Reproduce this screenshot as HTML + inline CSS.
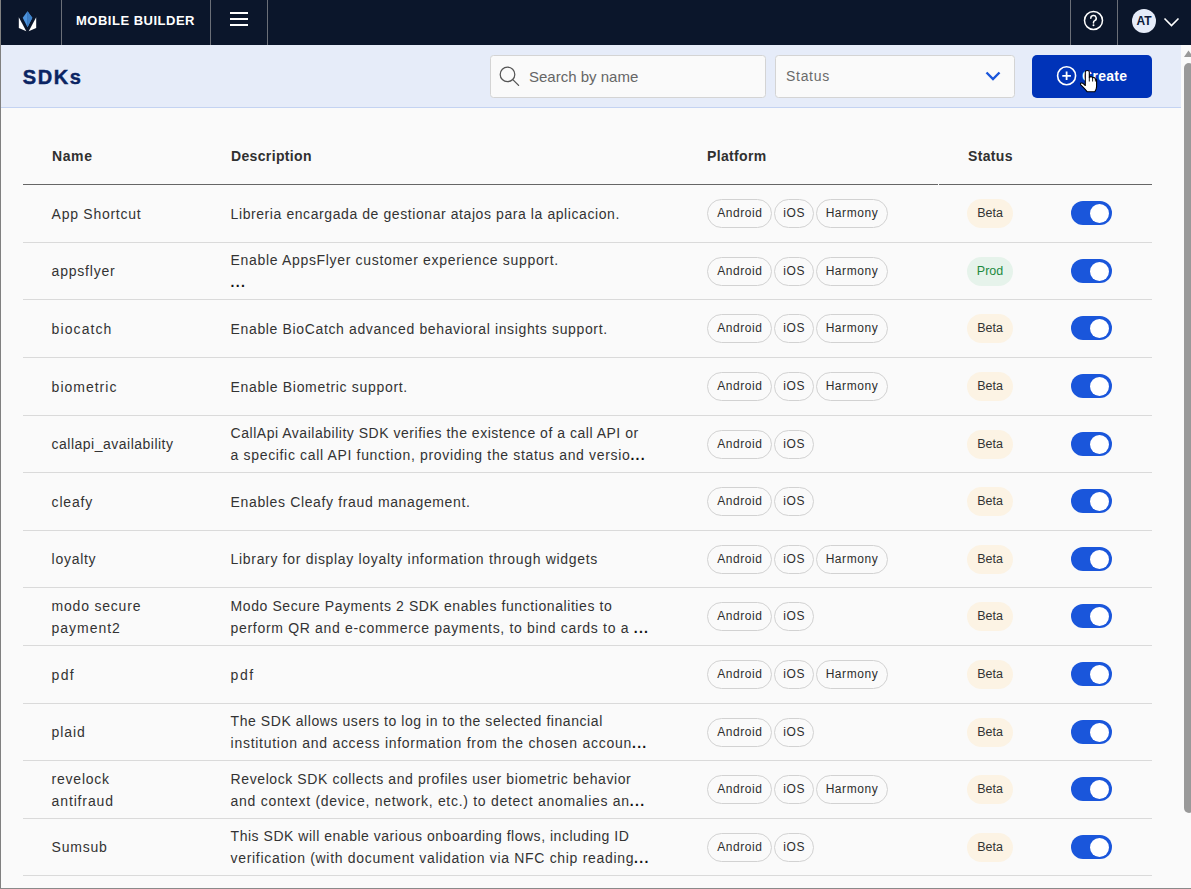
<!DOCTYPE html>
<html><head><meta charset="utf-8">
<style>
*{box-sizing:border-box;margin:0;padding:0}
html,body{width:1191px;height:889px;overflow:hidden}
body{font-family:"Liberation Sans",sans-serif;background:#fafafa;position:relative;color:#333}
.abs{position:absolute}
#hdr{left:0;top:0;width:1191px;height:45px;background:#0b162b}
.vsep{position:absolute;top:0;width:1px;height:45px;background:#6b6f78}
#brand{left:76px;top:13px;font-weight:bold;font-size:13px;color:#fff;letter-spacing:0.5px}
#sub{left:0;top:45px;width:1181px;height:63px;background:#e6ecf9;border-bottom:1px solid #c4d3f2}
#title{left:22.7px;top:65.5px;font-weight:bold;font-size:20px;color:#0b2463;letter-spacing:1.6px;-webkit-text-stroke:0.45px #0b2463}
.input{position:absolute;background:#fafafa;border:1px solid #d4d4d4;border-radius:3.5px}
#search{left:490px;top:55px;width:276px;height:43px}
#status{left:775px;top:55px;width:240px;height:43px}
#create{left:1032px;top:55px;width:120px;height:43px;background:#0033b8;border-radius:5px}
.ph{position:absolute;color:#666;font-size:15px}
.hd{position:absolute;top:148px;font-weight:bold;font-size:14px;color:#303030;letter-spacing:0.35px}
.hline{position:absolute;left:23px;top:184px;width:1129px;height:1px;background:#666}
.rline{position:absolute;left:23px;width:1129px;height:1px;background:#dadada}
.nm,.ds{position:absolute;font-size:14px;color:#333;letter-spacing:0.5px;white-space:nowrap;line-height:22px}
.chips{position:absolute;left:707px;display:flex;gap:1.3px}
.chip{height:29px;border:1px solid #d2d2d2;border-radius:15px;font-size:12px;line-height:26.5px;color:#2e2e2e;text-align:center;letter-spacing:0.55px;text-indent:0.5px}
.badge{position:absolute;left:967px;width:46px;height:29px;border-radius:15px;font-size:12.5px;line-height:29px;text-align:center}
.beta{background:#fcf3e4;color:#333}
.prod{background:#e6f3eb;color:#1d8a3f}
.dots{letter-spacing:1.3px;color:#111}
.tog{position:absolute;left:1071px;width:41px;height:24px;border-radius:12px;background:#1a56db}
.tog::after{content:"";position:absolute;left:19px;top:2.5px;width:19px;height:19px;border-radius:50%;background:#fff}
#sb{left:1181px;top:45px;width:10px;height:843px;background:#fafafa}
#thumb{left:1184px;top:63px;width:10px;height:750px;background:#999;border-radius:5px}
</style></head><body>
<div id="hdr" class="abs">
  <svg class="abs" style="left:0;top:0" width="60" height="45" viewBox="0 0 60 45">
    <polygon points="27.5,11.3 32.3,17.8 27.5,27.2 22.7,17.8" fill="#4d93dc"/>
    <polygon points="27.5,11.3 32.3,17.8 27.5,27.2" fill="#3d80c8"/>
    <line x1="27.5" y1="12" x2="27.5" y2="26.5" stroke="#3570b5" stroke-width="0.6"/>
    <polygon points="18.8,17.3 26.3,31.2 18.8,28" fill="#fff"/>
    <polygon points="36.2,17.3 28.7,31.2 36.2,28" fill="#fff"/>
  </svg>
  <div class="vsep" style="left:61px"></div>
  <div id="brand" class="abs">MOBILE BUILDER</div>
  <div class="vsep" style="left:210px"></div>
  <div class="abs" style="left:230px;top:12px;width:18px;height:2px;background:#fff"></div>
  <div class="abs" style="left:230px;top:18px;width:18px;height:2px;background:#fff"></div>
  <div class="abs" style="left:230px;top:24px;width:18px;height:2px;background:#fff"></div>
  <div class="vsep" style="left:267px"></div>
  <div class="vsep" style="left:1070px"></div>
  <div class="vsep" style="left:1117px"></div>

  <svg class="abs" style="left:1082px;top:9px" width="24" height="24" viewBox="0 0 24 24"><circle cx="11.5" cy="11.5" r="9" fill="none" stroke="#fff" stroke-width="1.5"/><path d="M8.8 9.2a2.7 2.7 0 1 1 3.9 2.4c-.8.4-1.2 1-1.2 1.8v.6" fill="none" stroke="#fff" stroke-width="1.5" stroke-linecap="round"/><circle cx="11.5" cy="16.3" r="1" fill="#fff"/></svg>
  <div class="abs" style="left:1132px;top:9px;width:24px;height:24px;border-radius:50%;background:#e6ecf9;color:#0d1b3a;font-weight:bold;font-size:12px;line-height:24px;text-align:center">AT</div>
  <svg class="abs" style="left:1163px;top:15.7px" width="17" height="12" viewBox="0 0 17 12"><path d="M1.5 2.5 L8.5 9.5 L15.5 2.5" fill="none" stroke="#fff" stroke-width="1.6"/></svg>
</div>
<div id="sub" class="abs"></div>
<div id="title" class="abs">SDKs</div>
<div id="search" class="input"></div>
<div class="ph" style="left:529px;top:68px">Search by name</div>
<div id="status" class="input"></div>
<div class="ph" style="left:786px;top:68px;font-size:14px;letter-spacing:0.7px;color:#6a6a6a">Status</div>
<div id="create" class="abs"></div>

<svg class="abs" style="left:498px;top:66px" width="24" height="22" viewBox="0 0 24 22"><circle cx="9.5" cy="8.4" r="7.3" fill="none" stroke="#555" stroke-width="1.25"/><path d="M14.8 13.6 L20.6 19.4" stroke="#555" stroke-width="1.3" stroke-linecap="round"/></svg>
<svg class="abs" style="left:983.5px;top:70.3px" width="18" height="13" viewBox="0 0 18 13"><path d="M2.5 2.5 L9 9 L15.5 2.5" fill="none" stroke="#1a56db" stroke-width="2.4"/></svg>
<svg class="abs" style="left:1055px;top:64px" width="24" height="24" viewBox="0 0 24 24"><circle cx="11.6" cy="11.8" r="9" fill="none" stroke="#fff" stroke-width="1.6"/><path d="M11.6 7.5v8.6M7.3 11.8h8.6" stroke="#fff" stroke-width="1.8"/></svg>
<div class="abs" style="left:1082px;top:67.5px;font-weight:bold;font-size:14px;color:#fff;letter-spacing:0.3px">Create</div>
<svg class="abs" style="left:1079px;top:69px" width="20" height="25" viewBox="0 0 20 25"><path d="M6.3 3 Q6.3 1.5 8.3 1.5 Q10.3 1.5 10.3 3 L10.3 8.6 Q10.8 7.6 12.1 7.6 Q13.4 7.6 13.6 8.9 Q14.1 8.4 15.1 8.6 Q16.3 8.9 16.4 10.1 Q17.6 9.9 17.6 11.6 L17.6 17.5 Q17.6 20.3 15.8 22.8 L8.3 22.8 Q6.3 20.3 4.3 18.3 L1.8 15.8 Q1 14.7 2.1 14.1 Q3.4 13.6 4.8 15.1 L6.3 16.5 Z" fill="#fff" stroke="#000" stroke-width="1.1" stroke-linejoin="round"/><path d="M10.3 8.6 V12.5 M13.6 8.9 V12.5 M16.4 10.1 V12.5" stroke="#000" stroke-width="0.9"/></svg>
<div class="hd" style="left:52px;letter-spacing:0.6px">Name</div>
<div class="hd" style="left:231px">Description</div>
<div class="hd" style="left:707px">Platform</div>
<div class="hd" style="left:968px">Status</div>
<div class="hline"></div><div class="abs" style="left:938px;top:184px;width:1px;height:1px;background:#fafafa"></div>
<!--ROWS-->
<div class='rline' style='top:242px'></div>
<div class='nm' style='left:51.6px;top:202.5px'><span style='letter-spacing:0.73px'>App Shortcut</span></div>
<div class='ds' style='left:230.6px;top:202.5px'><span style='letter-spacing:0.58px'>Libreria encargada de gestionar atajos para la aplicacion.</span></div>
<div class='chips' style='top:199.0px'><div class='chip' style='width:65.3px'>Android</div><div class='chip' style='width:40.7px'>iOS</div><div class='chip' style='width:72.2px'>Harmony</div></div>
<div class='badge beta' style='top:199.0px'>Beta</div>
<div class='tog' style='top:201px'></div>
<div class='rline' style='top:299px'></div>
<div class='nm' style='left:51.6px;top:260.0px'><span style='letter-spacing:0.78px'>appsflyer</span></div>
<div class='ds' style='left:230.6px;top:249.0px'><span style='letter-spacing:0.67px'>Enable AppsFlyer customer experience support.</span><br><span style='letter-spacing:0.60px'><b class='dots'>...</b></span></div>
<div class='chips' style='top:256.5px'><div class='chip' style='width:65.3px'>Android</div><div class='chip' style='width:40.7px'>iOS</div><div class='chip' style='width:72.2px'>Harmony</div></div>
<div class='badge prod' style='top:256.5px'>Prod</div>
<div class='tog' style='top:259px'></div>
<div class='rline' style='top:357px'></div>
<div class='nm' style='left:51.6px;top:317.5px'><span style='letter-spacing:1.09px'>biocatch</span></div>
<div class='ds' style='left:230.6px;top:317.5px'><span style='letter-spacing:0.64px'>Enable BioCatch advanced behavioral insights support.</span></div>
<div class='chips' style='top:314.0px'><div class='chip' style='width:65.3px'>Android</div><div class='chip' style='width:40.7px'>iOS</div><div class='chip' style='width:72.2px'>Harmony</div></div>
<div class='badge beta' style='top:314.0px'>Beta</div>
<div class='tog' style='top:316px'></div>
<div class='rline' style='top:415px'></div>
<div class='nm' style='left:51.6px;top:375.5px'><span style='letter-spacing:1.00px'>biometric</span></div>
<div class='ds' style='left:230.6px;top:375.5px'><span style='letter-spacing:0.68px'>Enable Biometric support.</span></div>
<div class='chips' style='top:372.0px'><div class='chip' style='width:65.3px'>Android</div><div class='chip' style='width:40.7px'>iOS</div><div class='chip' style='width:72.2px'>Harmony</div></div>
<div class='badge beta' style='top:372.0px'>Beta</div>
<div class='tog' style='top:374px'></div>
<div class='rline' style='top:472px'></div>
<div class='nm' style='left:51.6px;top:433.0px'><span style='letter-spacing:0.49px'>callapi_availability</span></div>
<div class='ds' style='left:230.6px;top:422.0px'><span style='letter-spacing:0.52px'>CallApi Availability SDK verifies the existence of a call API or</span><br><span style='letter-spacing:0.66px'>a specific call API function, providing the status and versio<b class='dots'>...</b></span></div>
<div class='chips' style='top:429.5px'><div class='chip' style='width:65.3px'>Android</div><div class='chip' style='width:40.7px'>iOS</div></div>
<div class='badge beta' style='top:429.5px'>Beta</div>
<div class='tog' style='top:432px'></div>
<div class='rline' style='top:530px'></div>
<div class='nm' style='left:51.6px;top:490.5px'><span style='letter-spacing:0.82px'>cleafy</span></div>
<div class='ds' style='left:230.6px;top:490.5px'><span style='letter-spacing:0.64px'>Enables Cleafy fraud management.</span></div>
<div class='chips' style='top:487.0px'><div class='chip' style='width:65.3px'>Android</div><div class='chip' style='width:40.7px'>iOS</div></div>
<div class='badge beta' style='top:487.0px'>Beta</div>
<div class='tog' style='top:489px'></div>
<div class='rline' style='top:587px'></div>
<div class='nm' style='left:51.6px;top:548.0px'><span style='letter-spacing:0.72px'>loyalty</span></div>
<div class='ds' style='left:230.6px;top:548.0px'><span style='letter-spacing:0.68px'>Library for display loyalty information through widgets</span></div>
<div class='chips' style='top:544.5px'><div class='chip' style='width:65.3px'>Android</div><div class='chip' style='width:40.7px'>iOS</div><div class='chip' style='width:72.2px'>Harmony</div></div>
<div class='badge beta' style='top:544.5px'>Beta</div>
<div class='tog' style='top:547px'></div>
<div class='rline' style='top:645px'></div>
<div class='nm' style='left:51.6px;top:594.5px'><span style='letter-spacing:0.79px'>modo secure</span><br><span style='letter-spacing:0.97px'>payment2</span></div>
<div class='ds' style='left:230.6px;top:594.5px'><span style='letter-spacing:0.58px'>Modo Secure Payments 2 SDK enables functionalities to</span><br><span style='letter-spacing:0.68px'>perform QR and e-commerce payments, to bind cards to a <b class='dots'>...</b></span></div>
<div class='chips' style='top:602.0px'><div class='chip' style='width:65.3px'>Android</div><div class='chip' style='width:40.7px'>iOS</div></div>
<div class='badge beta' style='top:602.0px'>Beta</div>
<div class='tog' style='top:604px'></div>
<div class='rline' style='top:703px'></div>
<div class='nm' style='left:51.6px;top:663.5px'><span style='letter-spacing:1.35px'>pdf</span></div>
<div class='ds' style='left:230.6px;top:663.5px'><span style='letter-spacing:1.60px'>pdf</span></div>
<div class='chips' style='top:660.0px'><div class='chip' style='width:65.3px'>Android</div><div class='chip' style='width:40.7px'>iOS</div><div class='chip' style='width:72.2px'>Harmony</div></div>
<div class='badge beta' style='top:660.0px'>Beta</div>
<div class='tog' style='top:662px'></div>
<div class='rline' style='top:760px'></div>
<div class='nm' style='left:51.6px;top:721.0px'><span style='letter-spacing:0.88px'>plaid</span></div>
<div class='ds' style='left:230.6px;top:710.0px'><span style='letter-spacing:0.56px'>The SDK allows users to log in to the selected financial</span><br><span style='letter-spacing:0.72px'>institution and access information from the chosen accoun<b class='dots'>...</b></span></div>
<div class='chips' style='top:717.5px'><div class='chip' style='width:65.3px'>Android</div><div class='chip' style='width:40.7px'>iOS</div></div>
<div class='badge beta' style='top:717.5px'>Beta</div>
<div class='tog' style='top:720px'></div>
<div class='rline' style='top:818px'></div>
<div class='nm' style='left:51.6px;top:767.5px'><span style='letter-spacing:0.77px'>revelock</span><br><span style='letter-spacing:0.86px'>antifraud</span></div>
<div class='ds' style='left:230.6px;top:767.5px'><span style='letter-spacing:0.59px'>Revelock SDK collects and profiles user biometric behavior</span><br><span style='letter-spacing:0.71px'>and context (device, network, etc.) to detect anomalies an<b class='dots'>...</b></span></div>
<div class='chips' style='top:775.0px'><div class='chip' style='width:65.3px'>Android</div><div class='chip' style='width:40.7px'>iOS</div><div class='chip' style='width:72.2px'>Harmony</div></div>
<div class='badge beta' style='top:775.0px'>Beta</div>
<div class='tog' style='top:777px'></div>
<div class='rline' style='top:875px'></div>
<div class='nm' style='left:51.6px;top:836.0px'><span style='letter-spacing:0.76px'>Sumsub</span></div>
<div class='ds' style='left:230.6px;top:825.0px'><span style='letter-spacing:0.52px'>This SDK will enable various onboarding flows, including ID</span><br><span style='letter-spacing:0.68px'>verification (with document validation via NFC chip reading<b class='dots'>...</b></span></div>
<div class='chips' style='top:832.5px'><div class='chip' style='width:65.3px'>Android</div><div class='chip' style='width:40.7px'>iOS</div></div>
<div class='badge beta' style='top:832.5px'>Beta</div>
<div class='tog' style='top:835px'></div>
<!--/ROWS-->
<div id="sb" class="abs"></div>
<div id="thumb" class="abs"></div>
<div class="abs" style="left:0;top:0;width:1px;height:889px;background:#808080"></div>
<div class="abs" style="left:0;top:888px;width:1191px;height:1px;background:#8a8a8a"></div>
<svg class="abs" style="left:1183px;top:49px" width="10" height="9" viewBox="0 0 10 9"><path d="M1 8 L5.5 1.5 L10 8Z" fill="#999"/></svg>
</body></html>
